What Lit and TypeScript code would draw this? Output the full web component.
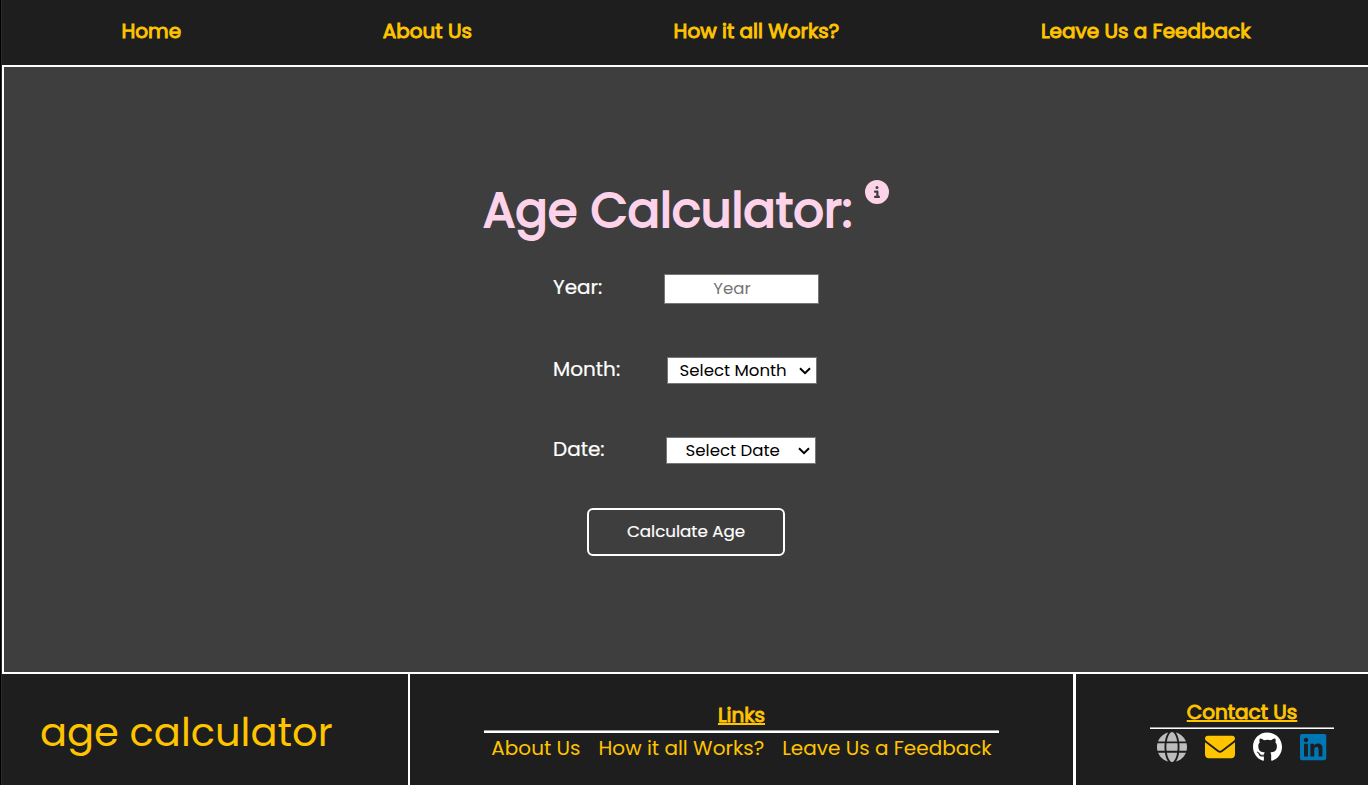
import { LitElement, html, css, svg } from "lit";
import { customElement } from "lit/decorators.js";

const icons = {
  info: { box: "0 0 512 512", d: "M256 512A256 256 0 1 0 256 0a256 256 0 1 0 0 512zM216 336h24V272H216c-13.3 0-24-10.7-24-24s10.7-24 24-24h48c13.3 0 24 10.7 24 24v88h8c13.3 0 24 10.7 24 24s-10.7 24-24 24H216c-13.3 0-24-10.7-24-24s10.7-24 24-24zm40-208a32 32 0 1 1 0 64 32 32 0 1 1 0-64z" },
  globe: { box: "0 0 512 512", d: "M352 256c0 22.2-1.2 43.6-3.3 64H163.3c-2.2-20.4-3.3-41.8-3.3-64s1.2-43.6 3.3-64H348.7c2.2 20.4 3.3 41.8 3.3 64zm28.8-64H503.9c5.3 20.5 8.1 41.9 8.1 64s-2.8 43.5-8.1 64H380.8c2.1-20.6 3.2-42 3.2-64s-1.1-43.4-3.2-64zm112.6-32H376.7c-10-63.9-29.8-117.4-55.3-151.6c78.3 20.7 142 77.5 171.9 151.6zm-149.1 0H167.7c6.1-36.4 15.5-68.6 27-94.7c10.5-23.6 22.2-40.7 33.5-51.5C239.4 3.2 248.7 0 256 0s16.6 3.2 27.8 13.8c11.3 10.8 23 27.9 33.5 51.5c11.6 26 20.9 58.2 27 94.7zm-209 0H18.6C48.6 85.9 112.2 29.1 190.6 8.4C165.1 42.6 145.3 96.1 135.3 160zM8.1 192H131.2c-2.1 20.6-3.2 42-3.2 64s1.1 43.4 3.2 64H8.1C2.8 299.5 0 278.1 0 256s2.8-43.5 8.1-64zM194.7 446.6c-11.6-26-20.9-58.2-27-94.6H344.3c-6.1 36.4-15.5 68.6-27 94.6c-10.5 23.6-22.2 40.7-33.5 51.5C272.6 508.8 263.3 512 256 512s-16.6-3.2-27.8-13.8c-11.3-10.8-23-27.9-33.5-51.5zM135.3 352c10 63.9 29.8 117.4 55.3 151.6C112.2 482.9 48.6 426.1 18.6 352H135.3zm358.1 0c-30 74.1-93.6 130.9-171.9 151.6c25.5-34.2 45.2-87.7 55.3-151.6H493.4z" },
  mail: { box: "0 0 512 512", d: "M48 64C21.5 64 0 85.5 0 112c0 15.1 7.1 29.3 19.2 38.4L236.8 313.6c11.4 8.5 27 8.5 38.4 0L492.8 150.4c12.1-9.1 19.2-23.3 19.2-38.4c0-26.5-21.5-48-48-48H48zM0 176V384c0 35.3 28.7 64 64 64H448c35.3 0 64-28.7 64-64V176L294.4 339.2c-22.8 17.1-54 17.1-76.8 0L0 176z" },
  github: { box: "0 0 496 512", d: "M165.9 397.4c0 2-2.3 3.6-5.2 3.6-3.3.3-5.6-1.3-5.6-3.6 0-2 2.3-3.6 5.2-3.6 3-.3 5.6 1.3 5.6 3.6zm-31.1-4.5c-.7 2 1.3 4.3 4.3 4.9 2.6 1 5.6 0 6.2-2s-1.3-4.3-4.3-5.2c-2.6-.7-5.5.3-6.2 2.3zm44.2-1.7c-2.9.7-4.9 2.6-4.6 4.9.3 2 2.9 3.3 5.9 2.6 2.9-.7 4.9-2.6 4.6-4.6-.3-1.9-3-3.2-5.9-2.9zM244.8 8C106.1 8 0 113.3 0 252c0 110.9 69.8 205.8 169.5 239.2 12.8 2.3 17.3-5.6 17.3-12.1 0-6.2-.3-40.4-.3-61.4 0 0-70 15-84.7-29.8 0 0-11.4-29.1-27.8-36.6 0 0-22.9-15.7 1.6-15.4 0 0 24.9 2 38.6 25.8 21.9 38.6 58.6 27.5 72.9 20.9 2.3-16 8.8-27.1 16-33.7-55.9-6.2-112.3-14.3-112.3-110.5 0-27.5 7.6-41.3 23.6-58.9-2.6-6.5-11.1-33.3 2.6-67.9 20.9-6.5 69 27 69 27 20-5.6 41.5-8.5 62.8-8.5s42.8 2.9 62.8 8.5c0 0 48.1-33.6 69-27 13.7 34.7 5.2 61.4 2.6 67.9 16 17.7 25.8 31.5 25.8 58.9 0 96.5-58.9 104.2-114.8 110.5 9.2 7.9 17 22.9 17 46.4 0 33.7-.3 75.4-.3 83.6 0 6.5 4.6 14.4 17.3 12.1C428.2 457.8 496 362.9 496 252 496 113.3 383.5 8 244.8 8zM97.2 352.9c-1.3 1-1 3.3.7 5.2 1.6 1.6 3.9 2.3 5.2 1 1.3-1 1-3.3-.7-5.2-1.6-1.6-3.9-2.3-5.2-1zm-10.8-8.1c-.7 1.3.3 2.9 2.3 3.9 1.6 1 3.6.7 4.3-.7.7-1.3-.3-2.9-2.3-3.9-2-.6-3.6-.3-4.3.7zm32.4 35.6c-1.6 1.3-1 4.3 1.3 6.2 2.3 2.3 5.2 2.6 6.5 1 1.3-1.3.7-4.3-1.3-6.2-2.2-2.3-5.2-2.6-6.5-1zm-11.4-14.7c-1.6 1-1.6 3.6 0 5.9 1.6 2.3 4.3 3.3 5.6 2.3 1.6-1.3 1.6-3.9 0-6.2-1.4-2.3-4-3.3-5.6-2z" },
  linkedin: { box: "0 0 448 512", d: "M416 32H31.9C14.3 32 0 46.5 0 64.3v383.4C0 465.5 14.3 480 31.9 480H416c17.6 0 32-14.5 32-32.3V64.3c0-17.8-14.4-32.3-32-32.3zM135.4 416H69V202.2h66.5V416zm-33.2-243c-21.3 0-38.5-17.3-38.5-38.5S80.9 96 102.2 96c21.2 0 38.5 17.3 38.5 38.5 0 21.3-17.2 38.5-38.5 38.5zm282.1 243h-66.4V312c0-24.8-.5-56.7-34.5-56.7-34.6 0-39.9 27-39.9 54.9V416h-66.4V202.2h63.7v29.2h.9c8.9-16.8 30.6-34.5 62.2-34.5 66.5 0 78.9 43.7 78.9 72.3V416z" },
};

const icon = (name: keyof typeof icons) => html`<svg class="icon ${name}" viewBox=${icons[name].box} aria-hidden="true">${svg`<path d=${icons[name].d}></path>`}</svg>`;

const picker = (label: string) => html`<div class="picker">
  <select><option>${label}</option></select>
  <svg class="chevron" viewBox="0 0 12 8" aria-hidden="true"><path d="M1 1.2 6 6.2 11 1.2"></path></svg>
</div>`;

@customElement("app-root")
class AppRoot extends LitElement {
  static styles = css`
    :host { display: block; height: 785px; overflow: hidden; font-family: Poppins, Inter, sans-serif; font-size: 20px; line-height: 30px; color: #fff; background: #1e1e1e; }
    * { box-sizing: border-box; }
    .page { height: 785px; display: flex; flex-direction: column; border-left: 1px solid #000; box-shadow: inset 1px 0 #2b2b2b; padding-left: 1px; }
    a { color: #ffc400; text-decoration: none; white-space: nowrap; }
    .heavy { -webkit-text-stroke: 0.95px currentColor; }
    nav { height: 65px; flex: none; display: flex; gap: 201.7px; padding: 16px 0 0 119.4px; }
    main { height: 609px; width: 1368px; flex: none; border: 2px solid #fff; background: #3e3e3e; padding: 108px 0 0 479px; }
    .title { display: flex; height: 72px; gap: 13px; }
    h1 { margin: 0; font-size: 48px; line-height: 72px; font-weight: 400; color: #fdd3e9; -webkit-text-stroke: 1.8px currentColor; white-space: nowrap; }
    .icon { display: block; height: 30px; width: 30px; fill: currentColor; }
    .icon.info { width: 24px; height: 24px; color: #fdd3e9; margin-top: 5px; }
    .row { display: flex; padding-left: 70px; height: 30px; align-items: flex-start; }
    .year { margin-top: 25px; }
    .month { margin-top: 52px; }
    .date { margin-top: 50px; }
    .row label { width: 111px; flex: none; -webkit-text-stroke: 0.2px currentColor; }
    input, select { font-family: inherit; font-size: 16.6px; border: 1px solid #767676; border-radius: 0; background: #fff; color: #000; margin: 0; outline: none; }
    input { width: 155px; height: 30px; padding: 0 19px 1px 0; margin-top: 2px; text-align: center; }
    input::placeholder { color: #757575; }
    .picker { display: grid; width: 150px; height: 27px; margin: 3px 0 0 3px; }
    .picker > * { grid-area: 1 / 1; }
    select { appearance: none; width: 150px; height: 27px; padding: 0 0 0 11.6px; }
    .chevron { width: 12px; height: 8px; align-self: center; justify-self: end; margin-right: 6px; fill: none; stroke: #000; stroke-width: 2; pointer-events: none; }
    .date .picker { margin-left: 2px; }
    .date select { padding-left: 18.6px; }
    button { display: block; width: 198px; height: 48px; margin: 44px 0 0 104px; padding: 0 0 2px; border: 2px solid #fff; border-radius: 6px; background: transparent; color: #fff; font: 16.7px/24px Poppins, Inter, sans-serif; -webkit-text-stroke: 0.2px currentColor; }
    footer { flex: 1; display: flex; }
    .brand { width: 408px; flex: none; border-right: 2px solid #fff; padding: 28px 0 0 38px; font-size: 40px; line-height: 60px; color: #ffc400; }
    .links { width: 666px; flex: none; border-right: 3px solid #fff; padding-top: 26px; display: flex; flex-direction: column; align-items: center; }
    .contact { flex: 1; padding: 23px 34px 0 74px; display: flex; flex-direction: column; align-items: center; }
    h2 { margin: 0; font-size: 20px; line-height: 30px; font-weight: 400; color: #ffc400; text-decoration: underline; text-decoration-thickness: 2px; text-underline-offset: 1px; text-decoration-skip-ink: none; }
    .rule { height: 3px; width: 515px; border-top: 1px solid #9a9a9a; background: #fff; }
    .list { display: flex; gap: 18px; }
    .contact .rule { height: 2px; width: 184px; }
    .socials { display: flex; gap: 18px; margin-top: 3px; }
    .globe { color: #bdbdbd; }
    .mail { color: #ffc400; }
    .github { width: 29px; color: #fff; }
    .linkedin { width: 26.25px; color: #0077b5; }
  `;

  render() {
    return html`<div class="page">
      <nav>
        ${["Home", "About Us", "How it all Works?", "Leave Us a Feedback"].map((t) => html`<a class="heavy">${t}</a>`)}
      </nav>
      <main>
        <div class="title"><h1>Age Calculator:</h1>${icon("info")}</div>
        <div class="row year"><label>Year:</label><input placeholder="Year" /></div>
        <div class="row month"><label>Month:</label>${picker("Select Month")}</div>
        <div class="row date"><label>Date:</label>${picker("Select Date")}</div>
        <button>Calculate Age</button>
      </main>
      <footer>
        <div class="brand">age calculator</div>
        <div class="links">
          <h2 class="heavy">Links</h2>
          <div class="rule"></div>
          <div class="list">${["About Us", "How it all Works?", "Leave Us a Feedback"].map((t) => html`<a>${t}</a>`)}</div>
        </div>
        <div class="contact">
          <h2 class="heavy">Contact Us</h2>
          <div class="rule"></div>
          <div class="socials">${icon("globe")}${icon("mail")}${icon("github")}${icon("linkedin")}</div>
        </div>
      </footer>
    </div>`;
  }
}
